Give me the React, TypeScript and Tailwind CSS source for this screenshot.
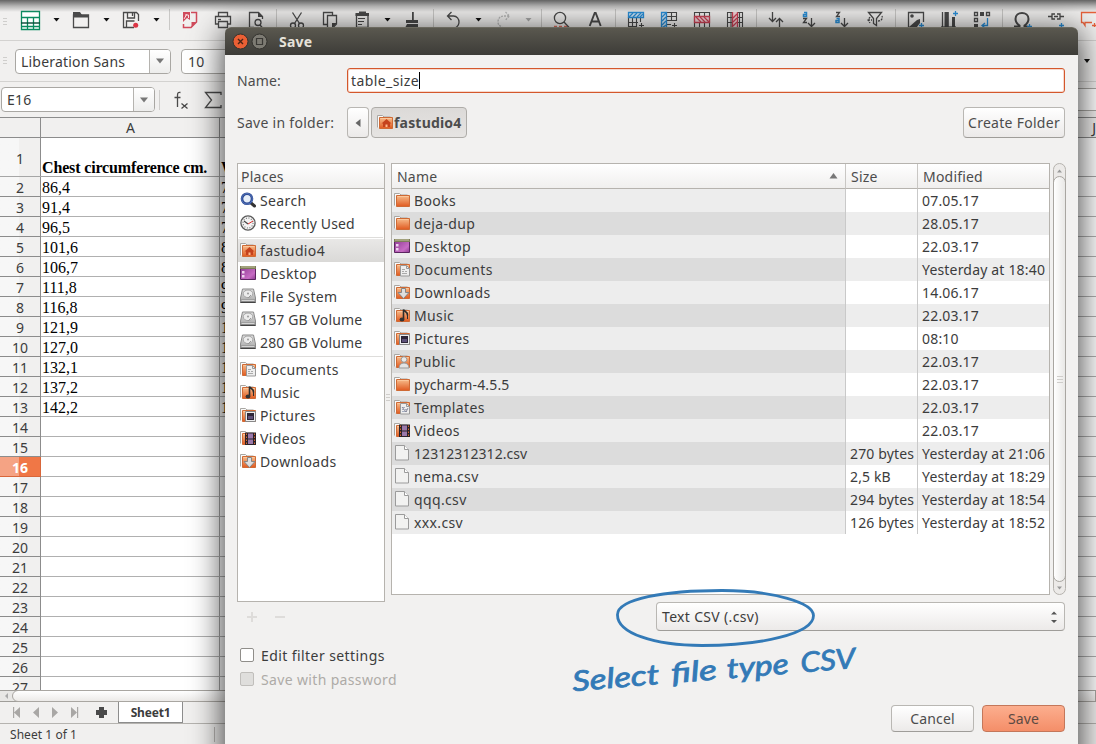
import React from "react";

/* ---------- toolbar ---------- */

const INK = "#4a4a4a";

/* One toolbar cell; its drawing uses the coordinates of the whole toolbar. */
function Cell({ x, to, children }: { x: number; to: number; children?: React.ReactNode }) {
  return (
    <svg className="shrink-0" width={to - x} height={40} viewBox={`${x} 0 ${to - x} 40`} fill="none" stroke={INK} strokeWidth="1.3">
      {children}
    </svg>
  );
}
const Caret = ({ x, c = "#111" }: { x: number; c?: string }) => <path d={`M${x - 3} 18h6l-3 3.5z`} fill={c} stroke="none" />;
const Sep = ({ x }: { x: number }) => <path d={`M${x + 0.5} 9v21`} stroke="#c9c8c6" strokeWidth="1" />;

function Toolbar() {
  return (
    <div className="flex h-[40px] shrink-0 overflow-hidden">
      <Cell x={0} to={15}>
        <path d="M3 18.5h4M3 21.5h4M3 24.5h4" stroke="#cfcecc" strokeWidth="1" />
      </Cell>
      <Cell x={15} to={48}>
        <path d="M21.5 11.5h18v18h-18z" stroke="#0b8a5f" fill="#fff" />
        <path d="M21.5 17.5h18M21.5 26.5h18M27.5 17v12M33.5 17v12" stroke="#0b8a5f" />
        <path d="M21 23h19" stroke="#064a35" strokeWidth="1.4" />
      </Cell>
      <Cell x={48} to={68}><Caret x={56.5} /></Cell>
      <Cell x={68} to={98}>
        <path d="M73.5 15v12.500h15V15z" />
        <path d="M73 12h7l2 3h7v2.500H73z" fill={INK} stroke="none" />
      </Cell>
      <Cell x={98} to={118}><Caret x={106.500} /></Cell>
      <Cell x={118} to={146}>
        <path d="M134 27.500h-10.500v-15h13l2 2V21" />
        <path d="M127.500 13v5h7v-5M132.500 13v3M126.500 27v-6h8" />
        <circle cx="135.700" cy="25.200" r="2.500" fill="#dc3545" stroke="none" />
      </Cell>
      <Cell x={146} to={176}><Caret x={156.500} /><Sep x={169} /></Cell>
      <Cell x={176} to={208}>
        <path d="M191 12.500h5.500V22l-5.500 5.500h-7.500V24" stroke="#d04a5b" strokeWidth="1.500" />
        <path d="M191.500 27v-5h5z" fill="#d04a5b" stroke="none" />
        <path d="M183 12h7v8l-3-2-4 4z" fill="#d04a5b" stroke="none" />
        <path d="M184 19l3-5M185 15h3.500v3" stroke="#f7dfe2" strokeWidth="1" />
      </Cell>
      <Cell x={208} to={240}>
        <path d="M218.500 16v-3.500h9V16M218.500 24h-3v-7.500h15V24h-3" />
        <path d="M218.500 21.500h9v6h-9z" fill="#eee" />
        <path d="M218 19.500h3" />
      </Cell>
      <Cell x={240} to={270}>
        <path d="M254 27.500h-4.500v-15h9l4 4V19" />
        <path d="M258 12v5h5z" fill={INK} stroke="none" />
        <circle cx="258" cy="22.500" r="3" /><path d="M260 25l3 3.500" />
      </Cell>
      <Cell x={270} to={284}><Sep x={276} /></Cell>
      <Cell x={284} to={314}>
        <path d="M292.500 12.500l7 11M301.500 12.500l-7 11" />
        <circle cx="293" cy="25.500" r="2.500" /><circle cx="301" cy="25.500" r="2.500" />
      </Cell>
      <Cell x={314} to={346}>
        <path d="M327 24.500h-3.500v-12h9V15" /><path d="M327.500 15.500h9V24l-4 4h-5z" /><path d="M332 28v-5h5z" fill={INK} stroke="none" />
      </Cell>
      <Cell x={346} to={380}>
        <path d="M356.500 14.500h11.500v13h-11.500z" /><path d="M355.500 13h13.500v3h-13.500zM359 11.500h7v3h-7z" fill={INK} stroke="none" /><path d="M358 18.500h7M358 21.500h6M358 24.500h4" strokeWidth="1" />
      </Cell>
      <Cell x={380} to={400}><Caret x={387.500} /></Cell>
      <Cell x={400} to={428}>
        <path d="M412 12h1.800v8H418v3h-12v-3h6zM407 24h11v4h-13z" fill={INK} stroke="none" />
      </Cell>
      <Cell x={428} to={441}><Sep x={433} /></Cell>
      <Cell x={441} to={470}><path d="M451.500 12l-4 4 4 4M448 16h5.500c3.500 0 5.500 3 5.500 6s-2 5-4 6" /></Cell>
      <Cell x={470} to={490}><Caret x={478.500} /></Cell>
      <Cell x={490} to={520}><path d="M505.500 12l4 4-4 4M509 16h-5.500c-3.500 0-5.500 3-5.500 6s2 4 4 5" stroke="#b8b8b8" strokeDasharray="2 1" /></Cell>
      <Cell x={520} to={548}><Caret x={528.500} c="#a8a8a8" /><Sep x={541} /></Cell>
      <Cell x={548} to={580}>
        <circle cx="560" cy="18" r="5.600" /><path d="M564 22l5.500 6" /><path d="M554 26.500h13" stroke="#e07060" strokeDasharray="3 2" />
      </Cell>
      <Cell x={580} to={608}><path d="M589.700 26l5-13h1l5 13M591.500 21.500h7.500" strokeWidth="1.900" /></Cell>
      <Cell x={608} to={622}><Sep x={615} /></Cell>
      <Cell x={622} to={654}>
        <path d="M628.500 17v11M632.500 18v10M636.500 18v10M640.500 17v5M628 22.500h10M628 26.500h8M639 25.500h5M641.500 23v5" strokeWidth="1.100" />
        <path d="M628.500 12.500h15v5h-15z" fill="#d5e8f7" stroke="#2a8fd8" /><path d="M629 17l4-4M633 17l4-4M637 17l4-4M640 17l3-3" stroke="#2a8fd8" />
      </Cell>
      <Cell x={654} to={687}>
        <path d="M667 12.500h9.500v8h-9.500M667 16.500h9M671.500 12v8M667 24.500h4M672 25.500h5M674.500 23v5" strokeWidth="1.100" />
        <path d="M661.500 12.500h5v15h-5z" fill="#d5e8f7" stroke="#2a8fd8" /><path d="M662 17l4-4M662 21l4-4M662 25l4-4M662 28l4-3" stroke="#2a8fd8" />
      </Cell>
      <Cell x={687} to={720}>
        <path d="M694.500 12.500h15v15h-15zM699.500 12v5M704.500 12v5M699.500 23v5M704.500 23v5" strokeWidth="1.100" />
        <path d="M694.500 16.500h15v6h-15z" fill="#f5d5da" stroke="#cc4256" /><path d="M696 17l5 5M700 17l5 5M704 17l5 5" stroke="#cc4256" />
      </Cell>
      <Cell x={720} to={750}>
        <path d="M727.500 12.500h15v15h-15zM727 17.500h15M727 22.500h15M731 12v15M739.500 12v15" strokeWidth="1.100" />
        <path d="M732.500 12v16h5V12" fill="#f5d5da" stroke="#cc4256" /><path d="M733 18l4-4M733 22l4-4M733 26l4-4" stroke="#cc4256" />
      </Cell>
      <Cell x={750} to={763}><Sep x={756} /></Cell>
      <Cell x={763} to={795}><path d="M772.500 12v9.500M769 18l3.500 3.500L776 18M779.500 28v-9.500M776 22l3.500-3.500L783 22" /></Cell>
      <Cell x={795} to={828}>
        <path d="M804 12.500h2.500v4H803.500v-2h3" stroke="#2a8fd8" strokeWidth="1.500" /><path d="M803 18.500h3.500l-3 4h3.500M811.500 18v8.500M808 23l3.500 3.500L815 23" />
      </Cell>
      <Cell x={828} to={860}>
        <path d="M836 12.500h3.500l-3 4h3.500M844.500 18v8.500M841 23l3.500 3.500L848 23" /><path d="M836.500 18.500h2.500v4h-3v-2h3" stroke="#2a8fd8" strokeWidth="1.500" />
      </Cell>
      <Cell x={860} to={890}>
        <path d="M868.500 12.500h13l-5 6v7l-3-2v-5z" /><path d="M868 20h4M878 21c3 0 5-2 4-5M870 17l-2 3 2 3" strokeDasharray="2 1" />
      </Cell>
      <Cell x={890} to={902}><Sep x={895} /></Cell>
      <Cell x={902} to={934}>
        <path d="M923.500 22V12.500h-15v15h8" /><circle cx="912" cy="16" r="1.800" fill={INK} stroke="none" /><path d="M909 27l8-7 3-1v4l-3 4z" fill={INK} stroke="none" /><path d="M919 25.500h5M921.500 23v5" stroke="#2a8fd8" />
      </Cell>
      <Cell x={934} to={966}>
        <path d="M942.500 12v15M948 12v15" strokeWidth="1.300" /><path d="M944.500 12h4v15h-4zM952 17h3v10h-3z" fill={INK} stroke="none" /><path d="M953 13.500h5M955.500 11v5" stroke="#2a8fd8" /><path d="M941 27h15" />
      </Cell>
      <Cell x={966} to={997}>
        <path d="M974.500 12.500h3v3h-3zM986.500 12.500h3v3h-3zM974.500 18.500h3v3h-3z" /><path d="M980 12h4v4h-4zM974 24h4v4h-4z" fill={INK} stroke="none" /><path d="M987.500 18v7.500H982M985 23l-3 2.500 3 2.500" stroke="#2a8fd8" />
      </Cell>
      <Cell x={997} to={1009}><Sep x={1002} /></Cell>
      <Cell x={1009} to={1042}>
        <path d="M1014 26.500h5.500v-1c-3-2-4-4-4-6.500 0-4 3-6 6.500-6s6.500 2 6.500 6c0 2.500-1 4.500-4 6.500v1h3" strokeWidth="2" /><path d="M1027 26.500h5M1029.500 24v4" stroke="#2a8fd8" />
      </Cell>
      <Cell x={1042} to={1074}>
        <path d="M1048 16.500h4M1060 16.500h4M1055 14h-3v5h3M1057 14h3v5h-3M1054 16.500h4" /><path d="M1059 25.500h5M1061.500 23v5" stroke="#2a8fd8" />
      </Cell>
      <Cell x={1074} to={1096}>
        <path d="M1096 12.500h-14.500v10h1.500l2 3v-3h7" stroke="#e8613a" /><path d="M1092 25.500h4M1094.500 23v4" stroke="#e8613a" />
      </Cell>
    </div>
  );
}

const Down = () => (
  <svg width="8" height="6" viewBox="0 0 8 6"><path d="M0 .5h8L4 5.500z" fill="#777" /></svg>
);

function Combo({ text, className }: { text: string; className: string }) {
  return (
    <div className={`flex h-[25px] shrink-0 rounded-[4px] border border-[#a9a7a3] bg-white text-[14px] text-[#3c3c3c] ${className}`}>
      <div className="flex flex-1 items-center pl-[5px] tracking-[0.2px]">{text}</div>
      <div className="flex w-[21px] items-center justify-center rounded-r-[3px] border-l border-[#b5b3af] bg-gradient-to-b from-white to-[#ededec]">
        <Down />
      </div>
    </div>
  );
}

/* ---------- spreadsheet ---------- */

const sheet: [number, string, string][] = [
  [2, "86,4", "76"], [3, "91,4", "76"], [4, "96,5", "76"], [5, "101,6", "86"], [6, "106,7", "86"], [7, "111,8", "96"],
  [8, "116,8", "96"], [9, "121,9", "101"], [10, "127,0", "106"], [11, "132,1", "111"], [12, "137,2", "116"], [13, "142,2", "121"],
  [14, "", ""], [15, "", ""], [16, "", ""], [17, "", ""], [18, "", ""], [19, "", ""], [20, "", ""], [21, "", ""], [22, "", ""],
  [23, "", ""], [24, "", ""], [25, "", ""], [26, "", ""], [27, "", ""],
];

function Sheet() {
  return (
    <div className="h-[573px] shrink-0 overflow-hidden border-t border-[#8c8c8c] bg-white">
      <div className="flex h-[20px] border-b border-[#8c8c8c] bg-[#f1f0ef] text-[14px] leading-[20px] text-[#3c3c3c]">
        <div className="w-[41px] border-r border-[#8c8c8c]" />
        <div className="w-[179px] border-r border-[#8c8c8c] pl-[1px] text-center">A</div>
        <div className="flex-1 text-right">J</div>
      </div>
      <div className="flex h-[39px] border-b border-[#a6a6a6]">
        <div className="flex w-[41px] items-center justify-center border-r border-[#8c8c8c] bg-linear-to-r from-[#f7f7f7] from-[19px] to-[#f1f0ef] to-[19px] pt-[3px] text-[14px] text-[#3c3c3c]">1</div>
        <div className="flex w-[179px] items-end whitespace-nowrap border-r border-[#a6a6a6] pl-[1px] font-['Liberation_Serif',serif] text-[16px] leading-[17px] font-bold tracking-[-0.15px]">Chest circumference cm.</div>
        <div className="flex items-end pl-[1px] font-['Liberation_Serif',serif] text-[16px] leading-[17px] font-bold">W</div>
      </div>
      {sheet.map(([n, a, b]) => (
        <div key={n} className="flex h-[20px] border-b border-[#b0b0b0]">
          <div
            className={
              n === 16
                ? "flex h-[20px] w-[41px] shrink-0 items-center justify-center border-r border-b border-[#d8663a] bg-linear-to-r from-[#f5a384] from-[19px] to-[#f07746] to-[19px] pt-px text-[14px] font-bold text-white"
                : "flex h-[20px] w-[41px] shrink-0 items-center justify-center border-r border-b border-[#8c8c8c] bg-linear-to-r from-[#f7f7f7] from-[19px] to-[#f1f0ef] to-[19px] pt-px text-[14px] text-[#3c3c3c]"
            }
          >
            {n}
          </div>
          <div className="w-[179px] shrink-0 border-r border-[#a6a6a6] pl-[1px] font-['Liberation_Serif',serif] text-[16px] leading-[21px] text-black">{a}</div>
          <div className="pl-[1px] font-['Liberation_Serif',serif] text-[16px] leading-[21px] text-black">{b}</div>
        </div>
      ))}
    </div>
  );
}

/* ---------- 16px place and file icons ---------- */

type Kind = "search" | "recent" | "home" | "desktop" | "disk" | "docs" | "music" | "pics" | "videos" | "down" | "folder" | "public" | "templates" | "file";

function FolderBase() {
  return (
    <>
      <path d="M.5 13.500V1.500H5.500L7 3h6.500v9" fill="#fafafa" stroke="#a9a7a3" />
      <path d="M2.500 3.500h13v11h-13z" fill="url(#fold)" stroke="#cf6a35" />
      <path d="M3.500 4.500h11" stroke="#fbc79b" />
    </>
  );
}

function Icon({ kind }: { kind: Kind }) {
  let body: React.ReactNode = null;
  switch (kind) {
    case "search":
      body = (<><path d="M11 11l3.500 3" stroke="#333" strokeWidth="3" strokeLinecap="round" /><circle cx="7" cy="6.800" r="5" fill="#e6eef8" stroke="#2c4a94" strokeWidth="2.600" /><circle cx="7" cy="6.800" r="5.300" fill="none" stroke="#6f8fd0" strokeWidth=".6" /></>);
      break;
    case "recent":
      body = (<><circle cx="8" cy="8" r="7.100" fill="#f3f3f3" stroke="#5a5a5a" strokeWidth="1.300" /><circle cx="8" cy="8" r="5" fill="none" stroke="#777" strokeWidth="1.200" strokeDasharray="1 1.600" /><path d="M4 6l4 3" stroke="#444" strokeWidth="1.200" /><path d="M8 9l5-3" stroke="#d33" /></>);
      break;
    case "desktop":
      body = (<><path d="M.5 1.500h15v13H.5z" fill="url(#desk)" stroke="#5b2560" /><path d="M0 1h16v3H0z" fill="#7d7c58" /><path d="M1 2h14" stroke="#c8c7a2" /><path d="M2 6h2.500v2.500H2zM2 10h2.500v2.500H2z" fill="#eed4ee" /></>);
      break;
    case "disk":
      body = (<><path d="M2.500 1h11l2 9v4.500H.5V10z" fill="url(#disk)" stroke="#8b8b8b" /><ellipse cx="8" cy="5.800" rx="4.800" ry="3.800" fill="#ececec" stroke="#a5a5a5" /><circle cx="8" cy="5.500" r="1" fill="#999" /><path d="M8 10l3-3" stroke="#999" /><path d="M.5 11.500h15v3H.5z" fill="#8a8a8a" /><path d="M1.500 12.500h13" stroke="#d5d5d5" /><path d="M.5 14.500h15" stroke="#444" /></>);
      break;
    case "file":
      body = (<><path d="M1.500 .5h9l4 4v10.500h-13z" fill="#f2f2f1" stroke="#9b9b9b" /><path d="M10.500 .5v4h4" fill="#fff" stroke="#9b9b9b" /></>);
      break;
    case "folder":
      body = <FolderBase />;
      break;
    case "home":
      body = (<><FolderBase /><path d="M9.500 5l5 4.500h-1.500V13H6V9.500H4.500z" fill="#c5421c" /><path d="M8.500 10.500h2V13h-2z" fill="#ffb98c" /></>);
      break;
    case "docs":
    case "templates":
      body = (<><FolderBase /><path d="M6.500 4.500h6l3 3v7.500h-9z" fill="#eee" stroke="#999" /><path d="M12.500 4.500v3h3" fill="none" stroke="#999" /><path d="M8 8.500h3M8 10.500h2M11 10.500h2M8 12.500h5" stroke={kind === "docs" ? "#aaa" : "#a3adbf"} />{kind === "templates" && <path d="M8 8l4 5 2-4" fill="none" stroke="#8a8a9c" />}</>);
      break;
    case "music":
      body = (<><FolderBase /><path d="M9.500 12V2.500c1 2.500 4.500 2 4 6" fill="none" stroke="#2c2c2c" strokeWidth="1.600" /><path d="M13.500 7v5" stroke="#2c2c2c" strokeWidth="1" /><ellipse cx="8" cy="12.500" rx="2.400" ry="2" fill="#333" /></>);
      break;
    case "pics":
      body = (<><FolderBase /><path d="M5.500 4.500h10v10h-10z" fill="#eee" stroke="#888" /><path d="M7 6h7v7H7z" fill="#2d2638" /><path d="M8 9h5v3H8z" fill="#5d5078" /></>);
      break;
    case "videos":
      body = (<><FolderBase /><path d="M5 2.500h11V15H5z" fill="#2a2228" /><path d="M8 3.500h5v5H8zM8 9.500h5V14H8z" fill="#9a78aa" /><path d="M6.500 3.500V15M14.500 3.500V15" stroke="#d8642f" strokeDasharray="1.500 1.500" /></>);
      break;
    case "down":
      body = (<><FolderBase /><path d="M7.500 4.500h4v4H15l-5.500 6-5.500-6h3.500z" fill="#dedede" stroke="#858585" /></>);
      break;
    case "public":
      body = (<><FolderBase /><circle cx="10" cy="6.500" r="2.800" fill="#e8e8e8" stroke="#999" /><path d="M5 15c0-3 2-5 5-5s5 2 5 5z" fill="#e4e4e4" stroke="#999" /></>);
      break;
  }
  return (
    <svg className="mb-px shrink-0" width="16" height="16" viewBox="0 0 16 16">
      <defs>
        <linearGradient id="fold" x1="0" y1="0" x2="0" y2="1"><stop offset="0" stopColor="#f7bd8c" /><stop offset="1" stopColor="#e05a20" /></linearGradient>
        <linearGradient id="desk" x1="0" y1="0" x2="1" y2="1"><stop offset="0" stopColor="#8b3a90" /><stop offset=".7" stopColor="#c76cc4" /><stop offset="1" stopColor="#8b3a90" /></linearGradient>
        <linearGradient id="disk" x1="0" y1="0" x2="0" y2="1"><stop offset="0" stopColor="#dedede" /><stop offset="1" stopColor="#a8a8a8" /></linearGradient>
      </defs>
      {body}
    </svg>
  );
}

/* ---------- dialog ---------- */

const places: [Kind, string][][] = [
  [["search", "Search"], ["recent", "Recently Used"]],
  [["home", "fastudio4"], ["desktop", "Desktop"], ["disk", "File System"], ["disk", "157 GB Volume"], ["disk", "280 GB Volume"]],
  [["docs", "Documents"], ["music", "Music"], ["pics", "Pictures"], ["videos", "Videos"], ["down", "Downloads"]],
];

const files: [Kind, string, string, string][] = [
  ["folder", "Books", "", "07.05.17"],
  ["folder", "deja-dup", "", "28.05.17"],
  ["desktop", "Desktop", "", "22.03.17"],
  ["docs", "Documents", "", "Yesterday at 18:40"],
  ["down", "Downloads", "", "14.06.17"],
  ["music", "Music", "", "22.03.17"],
  ["pics", "Pictures", "", "08:10"],
  ["public", "Public", "", "22.03.17"],
  ["folder", "pycharm-4.5.5", "", "22.03.17"],
  ["templates", "Templates", "", "22.03.17"],
  ["videos", "Videos", "", "22.03.17"],
  ["file", "12312312312.csv", "270 bytes", "Yesterday at 21:06"],
  ["file", "nema.csv", "2,5 kB", "Yesterday at 18:29"],
  ["file", "qqq.csv", "294 bytes", "Yesterday at 18:54"],
  ["file", "xxx.csv", "126 bytes", "Yesterday at 18:52"],
];

const btn = "flex items-center justify-center rounded-[4px] border border-[#b9b7b3] border-b-[#9f9d99] bg-linear-to-b from-white to-[#eceae9]";

const spacing = (label: string) =>
  /^\d{5}/.test(label) ? "tracking-[0.06px]" : /\d/.test(label) && label !== "fastudio4" ? "tracking-[0.14px]" : "tracking-[0.36px]";

function Places() {
  return (
    <div className="h-[439px] w-[148px] border border-[#b6b3ae] bg-white">
      <div className="flex h-[25px] items-center border-b border-[#b6b3ae] bg-linear-to-b from-white to-[#f0efee] pl-[3px] tracking-[0.25px] text-[#4c4c4c]">Places</div>
      {places.map((group, g) => (
        <React.Fragment key={g}>
          {g > 0 && <div className="mx-[1px] mt-[2px] mb-[1px] h-px bg-[#dedddb]" />}
          {group.map(([k, name]) => (
            <div key={name} className={`flex h-[23px] items-center gap-[4px] pl-[2px] ${name === "fastudio4" ? "bg-linear-to-b from-[#e9e8e7] to-[#dad9d7]" : ""}`}>
              <Icon kind={k} />
              <span className={name === "Recently Used" ? "tracking-[0.16px]" : spacing(name)}>{name}</span>
            </div>
          ))}
        </React.Fragment>
      ))}
    </div>
  );
}

function Files() {
  const head = "flex h-[25px] items-center border-b border-[#b6b3ae] bg-linear-to-b from-white to-[#f0efee] tracking-[0.2px] text-[#4c4c4c]";
  return (
    <div className="h-[432px] w-[659px] border border-[#b6b3ae] bg-white">
      <div className="flex">
        <div className={`${head} w-[454px] justify-between border-r border-r-[#c9c7c4] pr-[7px] pl-[5px]`}>
          Name
          <svg width="9" height="6" viewBox="0 0 9 6"><path d="M.5 5.500h8L4.500 0z" fill="#777" /></svg>
        </div>
        <div className={`${head} w-[72px] border-r border-r-[#c9c7c4] pl-[5px]`}>Size</div>
        <div className={`${head} flex-1 pl-[5px]`}>Modified</div>
      </div>
      {files.map(([k, name, size, mod], i) => (
        <div key={name} className={`flex h-[23px] whitespace-nowrap ${i % 2 ? "bg-[#ededed]" : "bg-white"}`}>
          <div className={`flex w-[454px] items-center gap-[4px] border-r border-[#c9c9c9] pl-[2px] ${i % 2 ? "bg-[#dcdcdc]" : "bg-[#ededed]"}`}>
            <Icon kind={k} />
            <span className={spacing(name)}>{name}</span>
          </div>
          <div className="flex w-[72px] items-center border-r border-[#c9c9c9] pl-[4px]">{size}</div>
          <div className="flex flex-1 items-center pl-[4px] tracking-[0.18px]">{mod}</div>
        </div>
      ))}
    </div>
  );
}

function Scrollbar() {
  return (
    <div className="flex h-[432px] w-[13px] flex-col items-center rounded-full border border-[#b6b3ae] bg-[#eceae8]">
      <svg className="h-[12px]" width="5" height="12" viewBox="0 0 5 12"><path d="M0 8.500h5L2.500 5.500z" fill="#999" /></svg>
      <div className="flex w-[13px] flex-1 flex-col items-center justify-center gap-[2px] rounded-full border border-[#a9a6a1] bg-linear-to-r from-white to-[#e9e8e6]">
        <div className="h-px w-[6px] bg-[#cfcdca]" /><div className="h-px w-[6px] bg-[#cfcdca]" /><div className="h-px w-[6px] bg-[#cfcdca]" />
      </div>
      <svg className="h-[12px]" width="5" height="12" viewBox="0 0 5 12"><path d="M0 4.500h5L2.500 7.500z" fill="#999" /></svg>
    </div>
  );
}

function Dialog() {
  return (
    <div className="absolute top-[27px] left-[225px] h-[760px] w-[853px] overflow-visible rounded-t-[6px] bg-[#f2f1f0] text-[14px] tracking-[0.01em] text-[#3c3c3c] shadow-[0_6px_32px_2px_rgba(0,0,0,0.75)]">
      <div className="flex h-[28px] items-center rounded-t-[6px] border-t border-[#6b695f] bg-linear-to-b from-[#5a584f] to-[#3d3c38] pl-[7px]">
        <svg width="36" height="18" viewBox="0 0 36 18">
          <circle cx="8.500" cy="8.500" r="7.500" fill="#ea5f34" stroke="#33322e" />
          <path d="M6 6l5 5M11 6l-5 5" stroke="#4a2416" strokeWidth="1.400" />
          <circle cx="27.500" cy="8.500" r="7.500" fill="#7d7b73" stroke="#33322e" />
          <path d="M24.500 5.500h6v6h-6z" fill="none" stroke="#3a3935" strokeWidth="1.200" />
        </svg>
        <span className="ml-[11px] font-bold tracking-[0.2px] text-[#e6e2da]">Save</span>
      </div>

      <div className="px-[12px] pt-[13px]">
        <div className="flex h-[25px] items-center">
          <div className="w-[110px] text-[#4c4c4c]">Name:</div>
          <div className="flex h-[25px] w-[718px] items-center rounded-[3px] border border-[#d4572c] bg-white pl-[3px] tracking-[0.4px] shadow-[inset_0_0_0_1px_#f6d9cd]">
            table_size<span className="h-[17px] w-px bg-black" />
          </div>
        </div>

        <div className="mt-[14px] flex h-[31px] items-center">
          <div className="w-[110px] tracking-[0.28px] text-[#4c4c4c]">Save in folder:</div>
          <div className={`${btn} h-[31px] w-[22px]`}>
            <svg width="6" height="8" viewBox="0 0 6 8"><path d="M5.500 0v8L.5 4z" fill="#666" /></svg>
          </div>
          <div className="ml-[2px] flex h-[31px] w-[96px] items-center gap-[1px] rounded-[4px] border border-[#aeaca8] bg-linear-to-b from-[#dcdad8] to-[#e6e4e2] pl-[5px] font-bold tracking-[0.18px] text-[#4c4c4c]">
            <Icon kind="home" />
            fastudio4
          </div>
          <div className={`${btn} mr-[1px] ml-auto h-[31px] w-[102px] tracking-[0.28px] text-[#4c4c4c]`}>Create Folder</div>
        </div>

        <div className="mt-[25px] flex h-[439px]">
          <Places />
          <div className="flex w-[6px] flex-col items-center justify-center gap-[2px] pt-[29px]">
            <div className="h-px w-[4px] bg-[#cfcdca]" /><div className="h-px w-[4px] bg-[#cfcdca]" /><div className="h-px w-[4px] bg-[#cfcdca]" />
          </div>
          <Files />
          <div className="w-[3px]" />
          <Scrollbar />
        </div>

        <div className="flex h-[29px] justify-between pr-[1px]">
          <svg width="60" height="29" viewBox="0 0 60 29"><path d="M10 15h10M15 10v10M38 15h10" stroke="#dedcda" strokeWidth="2" /></svg>
          <div className={`${btn} h-[29px] w-[409px] !justify-between pr-[7px] pl-[5px]`}>
            <span className="tracking-[0.33px]">Text CSV (.csv)</span>
            <svg width="6" height="14" viewBox="0 0 6 14"><path d="M0 4.500h6L3 1.500zM0 10h6l-3 3z" fill="#555" /></svg>
          </div>
        </div>

        <div className="mt-[12px] flex h-[24px] items-center gap-[7px] pl-[3px] tracking-[0.42px]">
          <div className="h-[14px] w-[14px] rounded-[2px] border border-[#908e8a] bg-white" />
          Edit filter settings
        </div>
        <div className="flex h-[24px] items-center gap-[7px] pl-[3px] tracking-[0.35px] text-[#aeaba7]">
          <div className="h-[14px] w-[14px] rounded-[2px] border border-[#c0bebb] bg-[#dfdedc]" />
          Save with password
        </div>

        <div className="mt-[14px] flex justify-end gap-[8px] pr-[1px]">
          <div className={`${btn} h-[27px] w-[83px] text-[#4c4c4c]`}>Cancel</div>
          <div className="flex h-[27px] w-[83px] items-center justify-center rounded-[4px] border border-[#c4775a] bg-linear-to-b from-[#fcae8e] to-[#f48e69] text-[#5c4a43]">Save</div>
        </div>
      </div>
    </div>
  );
}

function Annotation() {
  return (
    <svg className="absolute top-[580px] left-[560px]" width="320" height="124" viewBox="560 580 320 124">
      <path d="M617.500 614.500C618 599 664 590.500 722 590.500C774 590.500 813.500 603 813.500 615.500C813.500 634 760 645.500 702 645.500C654 645.500 617 633 617.500 614.500Z" fill="none" stroke="#337ab7" strokeWidth="2.800" />
      <g transform="rotate(-4.700 575 691)" fill="#337ab7" fontFamily="Lato, sans-serif" fontStyle="italic" fontSize="28" fontWeight="400" stroke="#337ab7" strokeWidth=".8">
        <text x="573" y="691" textLength="87" lengthAdjust="spacingAndGlyphs">Select</text>
        <text x="672" y="691" textLength="46" lengthAdjust="spacingAndGlyphs">file</text>
        <text x="728" y="691" textLength="62" lengthAdjust="spacingAndGlyphs">type</text>
        <text x="802" y="691" textLength="55" lengthAdjust="spacingAndGlyphs">CSV</text>
      </g>
    </svg>
  );
}

export default function App() {
  return (
    <div className="relative flex h-[744px] w-[1096px] flex-col overflow-hidden bg-[#f1f0ef] font-['Noto_Sans',sans-serif]">
      <Toolbar />
      <div className="flex h-[42px] shrink-0 items-center border-t border-b border-[#d3d2d0]">
        <svg className="mr-[8px] ml-[3px]" width="4" height="8" viewBox="0 0 4 8"><path d="M0 .5h4M0 3.500h4M0 6.500h4" stroke="#cfcecc" /></svg>
        <Combo text="Liberation Sans" className="w-[156px]" />
        <Combo text="10" className="ml-[10px] w-[80px] pl-[1px]" />
        <svg className="mr-[6px] ml-auto" width="6" height="4" viewBox="0 0 6 4"><path d="M0 0h6L3 4z" fill="#111" /></svg>
      </div>
      <div className="flex h-[35px] shrink-0 items-center">
        <Combo text="E16" className="ml-[1px] w-[154px]" />
        <div className="mx-[4px] h-[20px] w-px bg-[#cfcecc]" />
        <svg className="ml-[6px]" width="58" height="24" viewBox="0 0 58 24" fill="none" stroke="#4a4a4a" strokeWidth="1.300">
          <path d="M10.500 4.500C8 4 7.500 5 7.500 7.500V19M4.500 9.500h6M11.500 15.500l6 5M17.500 15.500l-6 5M51 7V4.500H35.500l6 7.500-6 7.500H51V17" />
        </svg>
        <div className="ml-[14px] h-[23px] flex-1 border-t border-b border-[#a9a7a3] bg-white" />
      </div>
      <Sheet />
      <div className="flex h-[12px] shrink-0 items-center border-t border-b border-[#9f9d99] bg-[#e8e7e5]">
        <svg className="w-[12px]" width="12" height="8" viewBox="0 0 12 8"><path d="M8 1v6L5 4z" fill="#aaa" /></svg>
        <div className="h-[12px] flex-1 rounded-l-full border border-[#a9a6a1] bg-linear-to-b from-white to-[#eceae8]" />
      </div>
      <div className="flex h-[22px] shrink-0 border-b border-[#b5b3af]">
        <svg width="118" height="21" viewBox="0 0 118 21" fill="#a9a7a5">
          <path d="M13 5h1.200v11H13zM20 5v11l-6-5.500zM39 5v11l-6-5.500zM52 5v11l6-5.500zM71 5v11l6-5.500zM77 5h1.200v11H77z" />
          <path d="M99 5h5v3h3v5h-3v3h-5v-3h-3V8h3z" fill="#4a4a4a" />
        </svg>
        <div className="flex h-[21px] w-[65px] items-center justify-center border border-t-0 border-[#8c8c8c] bg-white pt-px text-[12px] font-bold tracking-[-0.2px] text-[#3c3c3c]">Sheet1</div>
      </div>
      <div className="flex h-[20px] shrink-0 items-center pl-[10px] pt-px text-[12px] text-[#3c3c3c]">
        <span className="w-[204px] tracking-[0.05px]">Sheet 1 of 1</span>
        <div className="h-[15px] w-px bg-[#bbb9b6]" />
      </div>
      <div className="pointer-events-none absolute top-0 left-0 h-[12px] w-full bg-linear-to-b from-[#555]/90 via-[#777]/50 to-transparent" />
      <Dialog />
      <Annotation />
    </div>
  );
}
